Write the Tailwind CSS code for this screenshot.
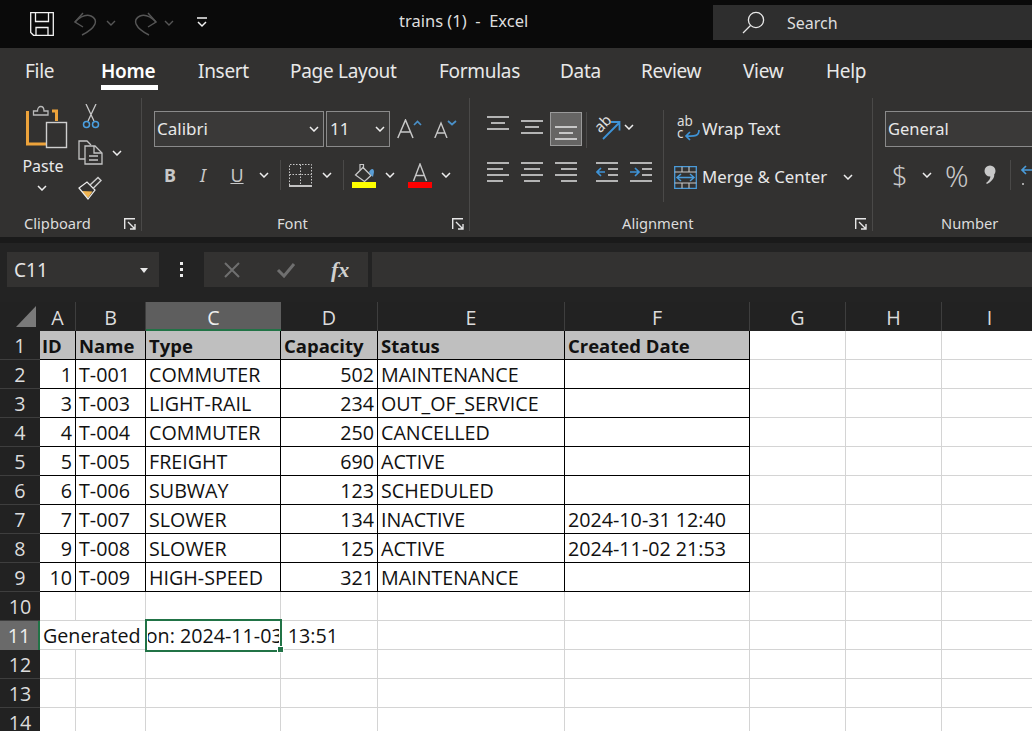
<!DOCTYPE html>
<html>
<head>
<meta charset="utf-8">
<script src="https://cdn.jsdelivr.net/npm/@tailwindcss/browser@4"></script>
<title>trains (1) - Excel</title>
</head>
<body class="w-[1032px] h-[731px] overflow-hidden bg-[#222222] font-['Noto_Sans','Open_Sans',sans-serif] text-[#e4e4e4]">

<!-- Title bar -->
<header class="h-[48px] bg-[#0a0a0a] flex items-start">
  <div class="w-[399px] h-full flex items-start shrink-0">
    <svg class="ml-[30px] mt-[12px]" width="24" height="24" viewBox="0 0 24 24" fill="none" stroke="#f2f2f2" stroke-width="1.3"><path d="M.7.7H23.3V23.3H3.5L.7 20.5Z"/><path d="M5.5.7V9.5H18.5V.7M6 23.3V15.5H18V23.3"/></svg>
    <svg class="ml-[20px] mt-[12px]" width="24" height="24" viewBox="0 0 24 24" fill="none" stroke="#565656" stroke-width="1.4"><path d="M9 1 1 10 9 15"/><path d="M1 10C6 5 12 2 17 4 25 8 22 16 8 23"/></svg>
    <svg class="ml-[8px] mt-[20px]" width="10" height="6" viewBox="0 0 10 6" fill="none" stroke="#565656" stroke-width="1.4"><path d="M1 1 5 5 9 1"/></svg>
    <svg class="ml-[17px] mt-[12px]" width="24" height="24" viewBox="0 0 24 24" fill="none" stroke="#565656" stroke-width="1.4"><path d="M15 1 23 10 15 15"/><path d="M23 10C18 5 12 2 7 4-1 8 2 16 16 23"/></svg>
    <svg class="ml-[7px] mt-[20px]" width="10" height="6" viewBox="0 0 10 6" fill="none" stroke="#565656" stroke-width="1.4"><path d="M1 1 5 5 9 1"/></svg>
    <svg class="ml-[22px] mt-[17px]" width="12" height="11" viewBox="0 0 12 11" fill="none" stroke="#f2f2f2" stroke-width="1.5"><path d="M1 1H11M2 5 6 9 10 5"/></svg>
  </div>
  <div class="w-[314px] shrink-0 h-[42px] leading-[42px] text-[16.500px] whitespace-pre text-[#dedede]">trains (1)  -  Excel</div>
  <div class="flex-1 mt-[5px] h-[35px] bg-[#2e2e2e] flex items-center">
    <svg class="ml-[29px]" width="23" height="23" viewBox="0 0 23 23" fill="none" stroke="#e8e8e8" stroke-width="1.3"><circle cx="14" cy="9" r="7.6"/><path d="M8.5 14.5 1 22"/></svg>
    <span class="ml-[22px] text-[16px] text-[#dedede]">Search</span>
  </div>
</header>

<!-- Tabs -->
<nav class="h-[48px] bg-[#323130] flex pl-[25px] text-[19px] tracking-[-0.3px] text-[#e8e8e8] leading-[46px]">
  <div class="w-[76px]">File</div>
  <div class="w-[97px] relative font-semibold text-white"><span class="border-b-[5px] border-white inline-block h-[42px] w-[57px]">Home</span></div>
  <div class="w-[92px]">Insert</div>
  <div class="w-[149px]">Page Layout</div>
  <div class="w-[121px]">Formulas</div>
  <div class="w-[81px]">Data</div>
  <div class="w-[102px]">Review</div>
  <div class="w-[83px]">View</div>
  <div class="w-[60px]">Help</div>
</nav>

<!-- Ribbon -->
<section class="h-[141px] bg-[#323130] flex overflow-hidden text-[#e8e8e8]">

  <!-- Clipboard -->
  <div class="w-[141px] shrink-0 flex flex-col">
    <div class="h-[115px] flex">
      <div class="w-[52px] ml-[26px] shrink-0 flex flex-col pt-[8px]">
        <svg width="42" height="46" viewBox="0 0 42 46" fill="none">
          <path d="M1.5 7V40H20M26 7H30.5V17" stroke="#eda33b" stroke-width="3"/>
          <path d="M7.5 11V7H11.5C11.5 1 18 1 18 7H22V11Z" stroke="#b9b9b9" stroke-width="1.3" fill="#323130"/>
          <rect x="20.5" y="18.5" width="20" height="25" stroke="#cfcfcf" stroke-width="1.4" fill="#323130"/>
        </svg>
        <div class="w-[42px] text-center text-[16px] leading-[22px] mt-[5px] -ml-[4px]">Paste</div>
        <svg class="ml-[11px] mt-[8px]" width="10" height="6" viewBox="0 0 10 6" fill="none" stroke="#eee" stroke-width="1.5"><path d="M1 1 5 5 9 1"/></svg>
      </div>
      <div class="flex flex-col pt-[8px]">
        <svg class="ml-[4px]" width="18" height="25" viewBox="0 0 18 25" fill="none"><path d="M4 0 12 17M14 0 6 17" stroke="#c8c8c8" stroke-width="1.3"/><circle cx="4.5" cy="20.5" r="3" stroke="#4a9fe0" stroke-width="1.5"/><circle cx="13.5" cy="20.5" r="3" stroke="#4a9fe0" stroke-width="1.5"/></svg>
        <div class="flex items-center mt-[11px]">
          <svg width="25" height="25" viewBox="0 0 25 25" fill="none" stroke="#c4c4c4" stroke-width="1.3"><path d="M7 19H1V1H9L13 5"/><path d="M7 6H17L24 13V24H7Z"/><path d="M16 6V13H24M11 16H20M11 20H20"/></svg>
          <svg class="ml-[9px]" width="10" height="6" viewBox="0 0 10 6" fill="none" stroke="#eee" stroke-width="1.5"><path d="M1 1 5 5 9 1"/></svg>
        </div>
        <svg class="mt-[11px]" width="24" height="24" viewBox="0 0 24 24" fill="none"><path d="M3.500 15 14.500 15.500 10 22Z" fill="#f0b450"/><path d="M1 12 9 6 17 14 10 23Z" stroke="#eeeeee" stroke-width="1.200"/><path d="M12 9 20 1.500 23 4.500 15 12.500" stroke="#cccccc" stroke-width="1.500"/></svg>
      </div>
    </div>
    <div class="flex-1 flex items-start pl-[24px] pr-[5px] justify-between">
      <span class="text-[14.700px] leading-[24px] text-[#dcdcdc]">Clipboard</span>
      <svg class="mt-[7px]" width="12" height="12" viewBox="0 0 12 12" fill="none" stroke="#e6e6e6" stroke-width="1.4"><path d="M11 .7H.7V11M4 4 11 11M11 6V11H6"/></svg>
    </div>
  </div>
  <div class="w-px bg-[#4a4948] mt-[2px] mb-[6px] shrink-0"></div>

  <!-- Font -->
  <div class="w-[327px] shrink-0 flex flex-col pl-[12px]">
    <div class="h-[115px] flex flex-col">
      <div class="mt-[15px] h-[36px] flex items-center">
        <div class="w-[170px] h-full border border-[#8a8a8a] bg-[#3a3938] flex items-center justify-between pl-[2px] pr-[4px] text-[17px]">
          <span>Calibri</span>
          <svg width="10" height="6" viewBox="0 0 10 6" fill="none" stroke="#eee" stroke-width="1.5"><path d="M1 1 5 5 9 1"/></svg>
        </div>
        <div class="ml-[2px] w-[64px] h-full border border-[#8a8a8a] bg-[#3a3938] flex items-center justify-between pl-[3px] pr-[4px] text-[17px]">
          <span>11</span>
          <svg width="10" height="6" viewBox="0 0 10 6" fill="none" stroke="#eee" stroke-width="1.5"><path d="M1 1 5 5 9 1"/></svg>
        </div>
        <svg class="ml-[7px]" width="25" height="20" viewBox="0 0 25 20" fill="none"><path d="M.8 19 8.5 1 16 19M3.5 13H13.5" stroke="#c8c8c8" stroke-width="1.5"/><path d="M17 6 20.5 2.5 24 6" stroke="#4a90c8" stroke-width="1.7"/></svg>
        <svg class="ml-[12px]" width="23" height="18" viewBox="0 0 23 18" fill="none"><path d="M.8 18 7 3 13 18M2.8 13H11" stroke="#c8c8c8" stroke-width="1.4"/><path d="M14 1 18 4.5 22 1" stroke="#4a90c8" stroke-width="1.7"/></svg>
      </div>
      <div class="mt-[10px] h-[36px] flex items-center">
        <div class="w-[32px] flex justify-center text-[18px] font-bold text-[#c8c8c8]">B</div>
        <div class="w-[34px] flex justify-center text-[18px] italic text-[#c8c8c8]">I</div>
        <div class="w-[34px] flex justify-center text-[18px] text-[#c8c8c8] underline">U</div>
        <div class="w-[20px] flex justify-center"><svg width="10" height="6" viewBox="0 0 10 6" fill="none" stroke="#eee" stroke-width="1.5"><path d="M1 1 5 5 9 1"/></svg></div>
        <div class="w-[12px] flex justify-center"><div class="w-px h-[30px] bg-[#4a4948]"></div></div>
        <div class="w-[29px] flex justify-center"><svg width="23" height="23" viewBox="0 0 23 23" fill="none"><path d="M.5 21V.5H22.5V21M.5 10.5H22.5M11.5.5V21" stroke="#c8c8c8" stroke-dasharray="1.5 1.5"/><path d="M0 22H23" stroke="#e8e8e8" stroke-width="1.6"/></svg></div>
        <div class="w-[24px] flex justify-center"><svg width="10" height="6" viewBox="0 0 10 6" fill="none" stroke="#eee" stroke-width="1.5"><path d="M1 1 5 5 9 1"/></svg></div>
        <div class="w-[8px] flex justify-center"><div class="w-px h-[30px] bg-[#4a4948]"></div></div>
        <div class="w-[34px] flex justify-center"><svg width="24" height="25" viewBox="0 0 24 25" fill="none"><path d="M3.5 12 11 4.5 19 12.5 12.5 18.500Z" stroke="#c8c8c8" stroke-width="1.3"/><path d="M8 7V1.500H11.500V6" stroke="#c8c8c8" stroke-width="1.2"/><path d="M17 9C19 5 22 5 22 9L21 14 19 12Z" fill="#5a9ed6"/><rect y="19" width="24" height="6" fill="#ffff00"/></svg></div>
        <div class="w-[18px] flex justify-center"><svg width="10" height="6" viewBox="0 0 10 6" fill="none" stroke="#eee" stroke-width="1.5"><path d="M1 1 5 5 9 1"/></svg></div>
        <div class="w-[42px] flex justify-center"><svg width="24" height="25" viewBox="0 0 24 25" fill="none"><path d="M5.500 18 12 1 18.500 18M7.500 12.500H16.500" stroke="#c8c8c8" stroke-width="1.4"/><rect y="19" width="24" height="6" fill="#ff0000"/></svg></div>
        <div class="w-[10px] flex justify-center"><svg width="10" height="6" viewBox="0 0 10 6" fill="none" stroke="#eee" stroke-width="1.5"><path d="M1 1 5 5 9 1"/></svg></div>
      </div>
    </div>
    <div class="flex-1 flex items-start justify-between pr-[5px]">
      <span class="ml-[123px] text-[14.700px] leading-[24px] text-[#dcdcdc]">Font</span>
      <svg class="mt-[7px]" width="12" height="12" viewBox="0 0 12 12" fill="none" stroke="#e6e6e6" stroke-width="1.4"><path d="M11 .7H.7V11M4 4 11 11M11 6V11H6"/></svg>
    </div>
  </div>
  <div class="w-px bg-[#4a4948] mt-[2px] mb-[6px] shrink-0"></div>

  <!-- Alignment -->
  <div class="w-[402px] shrink-0 flex flex-col">
    <div class="h-[115px] flex">
      <div class="w-[99px] ml-[17px] shrink-0 flex flex-col">
        <div class="mt-[16px] h-[34px] flex items-center">
          <svg class="-mt-[12px]" width="22" height="14" viewBox="0 0 22 14" fill="none" stroke="#e0e0e0" stroke-width="1.5"><path d="M0 1H22M4 7H18M0 13H22"/></svg>
          <svg class="ml-[12px] -mt-[4px]" width="22" height="14" viewBox="0 0 22 14" fill="none" stroke="#e0e0e0" stroke-width="1.5"><path d="M0 1H22M4 7H18M0 13H22"/></svg>
          <div class="ml-[7px] w-[32px] h-[34px] bg-[#666564] border border-[#9a9a9a] flex items-end justify-center pb-[5px] shrink-0">
            <svg width="22" height="14" viewBox="0 0 22 14" fill="none" stroke="#e8e8e8" stroke-width="1.5"><path d="M0 1H22M4 7H18M0 13H22"/></svg>
          </div>
        </div>
        <div class="mt-[14px] h-[24px] flex items-center">
          <svg width="22" height="20" viewBox="0 0 22 20" fill="none" stroke="#e0e0e0" stroke-width="1.5"><path d="M0 1H22M0 7H16M0 13H22M0 19H16"/></svg>
          <svg class="ml-[12px]" width="22" height="20" viewBox="0 0 22 20" fill="none" stroke="#e0e0e0" stroke-width="1.5"><path d="M0 1H22M3 7H19M0 13H22M3 19H19"/></svg>
          <svg class="ml-[12px]" width="22" height="20" viewBox="0 0 22 20" fill="none" stroke="#e0e0e0" stroke-width="1.5"><path d="M0 1H22M6 7H22M0 13H22M6 19H22"/></svg>
        </div>
      </div>
      <div class="w-px h-[36px] mt-[16px] bg-[#4a4948] shrink-0 self-start"></div>
      <div class="w-[76px] shrink-0 flex flex-col">
        <div class="mt-[14px] h-[34px] flex items-center pl-[8px]">
          <svg class="overflow-visible" width="26" height="26" viewBox="0 0 26 26" fill="none"><text x="0" y="15" transform="rotate(-45 8 11)" font-size="15" fill="#e0e0e0" font-family="Noto Sans">ab</text><path d="M8 25 24 9M16 8H24.500V16.500" stroke="#3f93d6" stroke-width="1.8"/></svg>
          <svg class="ml-[3px]" width="10" height="6" viewBox="0 0 10 6" fill="none" stroke="#eee" stroke-width="1.5"><path d="M1 1 5 5 9 1"/></svg>
        </div>
        <div class="mt-[16px] h-[24px] flex items-center pl-[9px]">
          <svg width="22" height="20" viewBox="0 0 22 20" fill="none"><path d="M0 1H22M12 7H22M12 13H22M0 19H22" stroke="#e0e0e0" stroke-width="1.5"/><path d="M9 10H1M5 6 1 10 5 14" stroke="#3f93d6" stroke-width="1.7"/></svg>
          <svg class="ml-[12px]" width="22" height="20" viewBox="0 0 22 20" fill="none"><path d="M0 1H22M12 7H22M12 13H22M0 19H22" stroke="#e0e0e0" stroke-width="1.5"/><path d="M0 10H9M5 6 9 10 5 14" stroke="#3f93d6" stroke-width="1.7"/></svg>
        </div>
      </div>
      <div class="w-px h-[92px] mt-[14px] bg-[#4a4948] shrink-0 self-start"></div>
      <div class="flex flex-col text-[16.800px] text-[#e8e8e8]">
        <div class="mt-[17px] h-[32px] flex items-center pl-[13px]">
          <span class="w-[23px] h-[26px] shrink-0"><svg class="overflow-visible" width="23" height="26" viewBox="0 0 23 26" fill="none"><text x="0" y="10" font-size="13.500" fill="#dcdcdc" font-family="Noto Sans">ab</text><text x="0" y="22" font-size="13.500" fill="#dcdcdc" font-family="Noto Sans">c</text><path d="M22 14C22 21 16 20 10 20M13 16 9 20 13 24" stroke="#3f93d6" stroke-width="1.7"/></svg></span>
          <span class="ml-[2px]">Wrap Text</span>
        </div>
        <div class="mt-[16px] h-[32px] flex items-center pl-[10px]">
          <svg class="shrink-0" width="23" height="23" viewBox="0 0 23 23" fill="none"><path d="M.7.7H22.300V22.300H.7Z" stroke="#4a9bd9" stroke-width="1.3"/><path d="M8 .7V6M15 .7V6M8 17V22.300M15 17V22.300M.7 6H22.300M.7 17H22.300" stroke="#c8c8c8" stroke-width="1.100"/><path d="M3 11.500H20M7 8 3 11.500 7 15M16 8 20 11.500 16 15" stroke="#4a9bd9" stroke-width="1.500"/></svg>
          <span class="ml-[5px] whitespace-nowrap">Merge &amp; Center</span>
          <svg class="ml-[16px] shrink-0" width="10" height="6" viewBox="0 0 10 6" fill="none" stroke="#eee" stroke-width="1.5"><path d="M1 1 5 5 9 1"/></svg>
        </div>
      </div>
    </div>
    <div class="flex-1 flex items-start justify-between pr-[5px]">
      <span class="ml-[152px] text-[14.700px] leading-[24px] text-[#dcdcdc]">Alignment</span>
      <svg class="mt-[7px]" width="12" height="12" viewBox="0 0 12 12" fill="none" stroke="#e6e6e6" stroke-width="1.4"><path d="M11 .7H.7V11M4 4 11 11M11 6V11H6"/></svg>
    </div>
  </div>
  <div class="w-px bg-[#4a4948] mt-[2px] mb-[6px] shrink-0"></div>

  <!-- Number -->
  <div class="flex-1 flex flex-col pl-[12px] min-w-0">
    <div class="h-[115px] flex flex-col">
      <div class="mt-[15px] h-[36px] w-[200px] border border-[#8a8a8a] bg-[#3a3938] flex items-center pl-[2px] text-[16.500px] shrink-0">General</div>
      <div class="mt-[10px] h-[36px] flex items-center text-[#c8c8c8]">
        <span class="ml-[7px] w-[14px] text-[27px] font-light leading-none">$</span>
        <svg class="ml-[16px]" width="10" height="6" viewBox="0 0 10 6" fill="none" stroke="#eee" stroke-width="1.5"><path d="M1 1 5 5 9 1"/></svg>
        <span class="ml-[13px] text-[29px] font-light leading-none">%</span>
        <svg class="ml-[15px]" width="12" height="20" viewBox="0 0 12 20" fill="#c8c8c8"><circle cx="6" cy="6" r="5.500"/><path d="M8 8C12 8 11 15 3 19L2 18C6 15 7 12 6 10Z"/></svg>
        <div class="ml-[14px] w-px h-[30px] bg-[#4a4948] shrink-0"></div>
        <svg class="ml-[9px] shrink-0" width="12" height="24" viewBox="0 0 12 24" fill="none"><path d="M12 7H2M6 3 2 7 6 11" stroke="#4a9bd9" stroke-width="1.7"/><circle cx="3" cy="21" r="1" fill="#ccc"/></svg>
      </div>
    </div>
    <div class="flex-1"><span class="ml-[56px] text-[14.700px] leading-[24px] text-[#dcdcdc]">Number</span></div>
  </div>
</section>

<!-- Formula bar -->
<div class="h-[6px] bg-[#1a1a1a]"></div>
<div class="h-[59px] bg-[#232323] flex pt-[9px] pl-[7px]">
  <div class="w-[152px] h-[35px] bg-[#333231] flex items-center justify-between pl-[7px] pr-[11px] pt-[1px] text-[19px]">
    <span>C11</span>
    <svg width="8" height="5" viewBox="0 0 8 5" fill="#e8e8e8"><path d="M0 0H8L4 5Z"/></svg>
  </div>
  <div class="w-[45px] h-[35px] flex flex-col items-center justify-center gap-[3px] shrink-0">
    <i class="block w-[3px] h-[3px] bg-[#ececec]"></i><i class="block w-[3px] h-[3px] bg-[#ececec]"></i><i class="block w-[3px] h-[3px] bg-[#ececec]"></i>
  </div>
  <div class="w-[164px] h-[35px] bg-[#333231] flex items-center pl-[19px] shrink-0">
    <svg width="18" height="16" viewBox="0 0 18 16" fill="none" stroke="#6f6f6f" stroke-width="2"><path d="M2 1 16 15M16 1 2 15"/></svg>
    <svg class="ml-[35px]" width="20" height="16" viewBox="0 0 20 16" fill="none" stroke="#6f6f6f" stroke-width="3"><path d="M2 8 8 14 18 2"/></svg>
    <span class="ml-[35px] font-['Liberation_Serif',serif] italic font-bold text-[22px] text-[#d0d0d0]">fx</span>
  </div>
  <div class="ml-[4px] flex-1 h-[35px] bg-[#333231]"></div>
</div>

<!-- Sheet -->
<main class="relative h-[429px] overflow-hidden bg-white">
  <div class="grid w-[1038px] grid-cols-[40px_36px_70px_135px_97px_187px_185px_96px_96px_96px] grid-rows-[29px] auto-rows-[29px] text-[19.700px] leading-[29px] text-[#111] whitespace-nowrap font-['Open_Sans',sans-serif]">
    <!-- column headers -->
    <div class="bg-[#222222] flex items-end justify-end pr-[4px] pb-[4px]"><svg width="20" height="21" viewBox="0 0 20 21" fill="#7a7a7a"><path d="M20 0V21H0Z"/></svg></div>
    <div class="bg-[#222222] text-[#dcdcdc] text-center leading-[31px] border-r border-[#3e3e3e]">A</div>
    <div class="bg-[#222222] text-[#dcdcdc] text-center leading-[31px] border-r border-[#3e3e3e]">B</div>
    <div class="bg-[#5e5e5e] text-[#eeeeee] text-center leading-[31px] border-b-2 border-[#217346]">C</div>
    <div class="bg-[#222222] text-[#dcdcdc] text-center leading-[31px] border-r border-[#3e3e3e]">D</div>
    <div class="bg-[#222222] text-[#dcdcdc] text-center leading-[31px] border-r border-[#3e3e3e]">E</div>
    <div class="bg-[#222222] text-[#dcdcdc] text-center leading-[31px] border-r border-[#3e3e3e]">F</div>
    <div class="bg-[#222222] text-[#dcdcdc] text-center leading-[31px] border-r border-[#3e3e3e]">G</div>
    <div class="bg-[#222222] text-[#dcdcdc] text-center leading-[31px] border-r border-[#3e3e3e]">H</div>
    <div class="bg-[#222222] text-[#dcdcdc] text-center leading-[31px] border-r border-[#3e3e3e]">I</div>

    <!-- row 1 -->
    <div class="bg-[#222222] text-[#dcdcdc] text-center border-b border-[#3e3e3e]">1</div>
    <div class="bg-[#bfbfbf] font-bold text-[18.500px] pl-[2px] border-r border-b border-black">ID</div>
    <div class="bg-[#bfbfbf] font-bold text-[18.500px] pl-[3px] border-r border-b border-black">Name</div>
    <div class="bg-[#bfbfbf] font-bold text-[18.500px] pl-[3px] border-r border-b border-black">Type</div>
    <div class="bg-[#bfbfbf] font-bold text-[18.500px] pl-[3px] border-r border-b border-black">Capacity</div>
    <div class="bg-[#bfbfbf] font-bold text-[18.500px] pl-[3px] border-r border-b border-black">Status</div>
    <div class="bg-[#bfbfbf] font-bold text-[18.500px] pl-[3px] border-r border-b border-black">Created Date</div>
    <div class="border-r border-b border-[#d4d4d4]"></div><div class="border-r border-b border-[#d4d4d4]"></div><div class="border-r border-b border-[#d4d4d4]"></div>

    <!-- row 2 -->
    <div class="bg-[#222222] text-[#dcdcdc] text-center border-b border-[#3e3e3e]">2</div>
    <div class="text-right pr-[3px] border-r border-b border-black">1</div>
    <div class="pl-[3px] border-r border-b border-black">T-001</div>
    <div class="pl-[3px] border-r border-b border-black">COMMUTER</div>
    <div class="text-right pr-[3px] border-r border-b border-black">502</div>
    <div class="pl-[3px] border-r border-b border-black">MAINTENANCE</div>
    <div class="pl-[3px] border-r border-b border-black"></div>
    <div class="border-r border-b border-[#d4d4d4]"></div><div class="border-r border-b border-[#d4d4d4]"></div><div class="border-r border-b border-[#d4d4d4]"></div>

    <!-- row 3 -->
    <div class="bg-[#222222] text-[#dcdcdc] text-center border-b border-[#3e3e3e]">3</div>
    <div class="text-right pr-[3px] border-r border-b border-black">3</div>
    <div class="pl-[3px] border-r border-b border-black">T-003</div>
    <div class="pl-[3px] border-r border-b border-black">LIGHT-RAIL</div>
    <div class="text-right pr-[3px] border-r border-b border-black">234</div>
    <div class="pl-[3px] border-r border-b border-black">OUT_OF_SERVICE</div>
    <div class="pl-[3px] border-r border-b border-black"></div>
    <div class="border-r border-b border-[#d4d4d4]"></div><div class="border-r border-b border-[#d4d4d4]"></div><div class="border-r border-b border-[#d4d4d4]"></div>

    <!-- row 4 -->
    <div class="bg-[#222222] text-[#dcdcdc] text-center border-b border-[#3e3e3e]">4</div>
    <div class="text-right pr-[3px] border-r border-b border-black">4</div>
    <div class="pl-[3px] border-r border-b border-black">T-004</div>
    <div class="pl-[3px] border-r border-b border-black">COMMUTER</div>
    <div class="text-right pr-[3px] border-r border-b border-black">250</div>
    <div class="pl-[3px] border-r border-b border-black">CANCELLED</div>
    <div class="pl-[3px] border-r border-b border-black"></div>
    <div class="border-r border-b border-[#d4d4d4]"></div><div class="border-r border-b border-[#d4d4d4]"></div><div class="border-r border-b border-[#d4d4d4]"></div>

    <!-- row 5 -->
    <div class="bg-[#222222] text-[#dcdcdc] text-center border-b border-[#3e3e3e]">5</div>
    <div class="text-right pr-[3px] border-r border-b border-black">5</div>
    <div class="pl-[3px] border-r border-b border-black">T-005</div>
    <div class="pl-[3px] border-r border-b border-black">FREIGHT</div>
    <div class="text-right pr-[3px] border-r border-b border-black">690</div>
    <div class="pl-[3px] border-r border-b border-black">ACTIVE</div>
    <div class="pl-[3px] border-r border-b border-black"></div>
    <div class="border-r border-b border-[#d4d4d4]"></div><div class="border-r border-b border-[#d4d4d4]"></div><div class="border-r border-b border-[#d4d4d4]"></div>

    <!-- row 6 -->
    <div class="bg-[#222222] text-[#dcdcdc] text-center border-b border-[#3e3e3e]">6</div>
    <div class="text-right pr-[3px] border-r border-b border-black">6</div>
    <div class="pl-[3px] border-r border-b border-black">T-006</div>
    <div class="pl-[3px] border-r border-b border-black">SUBWAY</div>
    <div class="text-right pr-[3px] border-r border-b border-black">123</div>
    <div class="pl-[3px] border-r border-b border-black">SCHEDULED</div>
    <div class="pl-[3px] border-r border-b border-black"></div>
    <div class="border-r border-b border-[#d4d4d4]"></div><div class="border-r border-b border-[#d4d4d4]"></div><div class="border-r border-b border-[#d4d4d4]"></div>

    <!-- row 7 -->
    <div class="bg-[#222222] text-[#dcdcdc] text-center border-b border-[#3e3e3e]">7</div>
    <div class="text-right pr-[3px] border-r border-b border-black">7</div>
    <div class="pl-[3px] border-r border-b border-black">T-007</div>
    <div class="pl-[3px] border-r border-b border-black">SLOWER</div>
    <div class="text-right pr-[3px] border-r border-b border-black">134</div>
    <div class="pl-[3px] border-r border-b border-black">INACTIVE</div>
    <div class="pl-[3px] border-r border-b border-black">2024-10-31 12:40</div>
    <div class="border-r border-b border-[#d4d4d4]"></div><div class="border-r border-b border-[#d4d4d4]"></div><div class="border-r border-b border-[#d4d4d4]"></div>

    <!-- row 8 -->
    <div class="bg-[#222222] text-[#dcdcdc] text-center border-b border-[#3e3e3e]">8</div>
    <div class="text-right pr-[3px] border-r border-b border-black">9</div>
    <div class="pl-[3px] border-r border-b border-black">T-008</div>
    <div class="pl-[3px] border-r border-b border-black">SLOWER</div>
    <div class="text-right pr-[3px] border-r border-b border-black">125</div>
    <div class="pl-[3px] border-r border-b border-black">ACTIVE</div>
    <div class="pl-[3px] border-r border-b border-black">2024-11-02 21:53</div>
    <div class="border-r border-b border-[#d4d4d4]"></div><div class="border-r border-b border-[#d4d4d4]"></div><div class="border-r border-b border-[#d4d4d4]"></div>

    <!-- row 9 -->
    <div class="bg-[#222222] text-[#dcdcdc] text-center border-b border-[#3e3e3e]">9</div>
    <div class="text-right pr-[3px] border-r border-b border-black">10</div>
    <div class="pl-[3px] border-r border-b border-black">T-009</div>
    <div class="pl-[3px] border-r border-b border-black">HIGH-SPEED</div>
    <div class="text-right pr-[3px] border-r border-b border-black">321</div>
    <div class="pl-[3px] border-r border-b border-black">MAINTENANCE</div>
    <div class="pl-[3px] border-r border-b border-black"></div>
    <div class="border-r border-b border-[#d4d4d4]"></div><div class="border-r border-b border-[#d4d4d4]"></div><div class="border-r border-b border-[#d4d4d4]"></div>

    <!-- row 10 -->
    <div class="bg-[#222222] text-[#dcdcdc] text-center border-b border-[#3e3e3e]">10</div>
    <div class="border-r border-b border-[#d4d4d4]"></div><div class="border-r border-b border-[#d4d4d4]"></div><div class="border-r border-b border-[#d4d4d4]"></div><div class="border-r border-b border-[#d4d4d4]"></div><div class="border-r border-b border-[#d4d4d4]"></div><div class="border-r border-b border-[#d4d4d4]"></div><div class="border-r border-b border-[#d4d4d4]"></div><div class="border-r border-b border-[#d4d4d4]"></div><div class="border-r border-b border-[#d4d4d4]"></div>

    <!-- row 11 -->
    <div class="bg-[#6a6a6a] text-[#eeeeee] text-center border-r-2 border-[#217346]">11</div>
    <div class="col-span-4 pl-[3px] border-r border-b border-[#d4d4d4]">Generated on: 2024-11-03 13:51</div>
    <div class="border-r border-b border-[#d4d4d4]"></div><div class="border-r border-b border-[#d4d4d4]"></div><div class="border-r border-b border-[#d4d4d4]"></div><div class="border-r border-b border-[#d4d4d4]"></div><div class="border-r border-b border-[#d4d4d4]"></div>

    <!-- row 12 -->
    <div class="bg-[#222222] text-[#dcdcdc] text-center border-b border-[#3e3e3e]">12</div>
    <div class="border-r border-b border-[#d4d4d4]"></div><div class="border-r border-b border-[#d4d4d4]"></div><div class="border-r border-b border-[#d4d4d4]"></div><div class="border-r border-b border-[#d4d4d4]"></div><div class="border-r border-b border-[#d4d4d4]"></div><div class="border-r border-b border-[#d4d4d4]"></div><div class="border-r border-b border-[#d4d4d4]"></div><div class="border-r border-b border-[#d4d4d4]"></div><div class="border-r border-b border-[#d4d4d4]"></div>

    <!-- row 13 -->
    <div class="bg-[#222222] text-[#dcdcdc] text-center border-b border-[#3e3e3e]">13</div>
    <div class="border-r border-b border-[#d4d4d4]"></div><div class="border-r border-b border-[#d4d4d4]"></div><div class="border-r border-b border-[#d4d4d4]"></div><div class="border-r border-b border-[#d4d4d4]"></div><div class="border-r border-b border-[#d4d4d4]"></div><div class="border-r border-b border-[#d4d4d4]"></div><div class="border-r border-b border-[#d4d4d4]"></div><div class="border-r border-b border-[#d4d4d4]"></div><div class="border-r border-b border-[#d4d4d4]"></div>

    <!-- row 14 -->
    <div class="bg-[#222222] text-[#dcdcdc] text-center">14</div>
    <div class="border-r border-b border-[#d4d4d4]"></div><div class="border-r border-b border-[#d4d4d4]"></div><div class="border-r border-b border-[#d4d4d4]"></div><div class="border-r border-b border-[#d4d4d4]"></div><div class="border-r border-b border-[#d4d4d4]"></div><div class="border-r border-b border-[#d4d4d4]"></div><div class="border-r border-b border-[#d4d4d4]"></div><div class="border-r border-b border-[#d4d4d4]"></div><div class="border-r border-b border-[#d4d4d4]"></div>
  </div>

  <!-- Selected cell C11 -->
  <div class="absolute left-[145px] top-[317px] w-[137px] h-[33px] border-2 border-[#217346] shadow-[inset_0_0_0_1px_white]"></div>
  <div class="absolute left-[277px] top-[344px] w-[7px] h-[7px] bg-[#217346] border border-white"></div>
</main>
</body>
</html>
